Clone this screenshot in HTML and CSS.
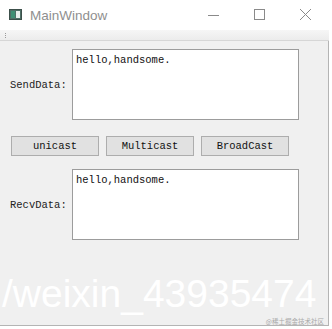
FILE: index.html
```html
<!DOCTYPE html>
<html lang="en">
<head>
  <meta charset="UTF-8" />
  <meta name="viewport" content="width=device-width, initial-scale=1.0" />
  <title>MainWindow</title>
  <link rel="stylesheet" href="styles.css">
</head>
<body>
  <div class="window">
    <div class="titlebar">
      <svg class="app-icon" width="13" height="11" viewBox="0 0 13 11">
        <rect x="0.5" y="0.5" width="12" height="10" fill="#4f6f66" stroke="#3c4f4a"/>
        <rect x="7" y="2" width="4" height="7" fill="#e8eeec"/>
        <rect x="2" y="2" width="4" height="7" fill="#3f8f74"/>
      </svg>
      <span class="title">MainWindow</span>
      <div class="controls">
        <svg width="46" height="30" viewBox="0 0 46 30"><line x1="18" y1="15.5" x2="29" y2="15.5" stroke="#8a8a8a"/></svg>
        <svg width="46" height="30" viewBox="0 0 46 30"><rect x="18.5" y="9.5" width="10" height="10" fill="none" stroke="#8a8a8a"/></svg>
        <svg width="46" height="30" viewBox="0 0 46 30"><path d="M18 9 L29 20 M29 9 L18 20" stroke="#8a8a8a" fill="none"/></svg>
      </div>
    </div>

    <div class="toolbar">
      <span class="grip"></span>
    </div>

    <div class="central">
      <div class="row">
        <label class="field-label">SendData:</label>
        <div class="textedit">hello,handsome.</div>
      </div>

      <div class="buttons">
        <button type="button">unicast</button>
        <button type="button">Multicast</button>
        <button type="button">BroadCast</button>
      </div>

      <div class="row">
        <label class="field-label">RecvData:</label>
        <div class="textedit">hello,handsome.</div>
      </div>

      <div class="watermark">/weixin_43935474</div>
      <div class="credit">@稀土掘金技术社区</div>
    </div>
  </div>
</body>
</html>
```

FILE: styles.css
```css
body {
  margin: 0;
  background: #ffffff;
  font-family: "Liberation Mono", "DejaVu Sans Mono", monospace;
}
.window {
  width: 332px;
  height: 329px;
  overflow: hidden;
}
.titlebar {
  height: 30px;
  display: flex;
  align-items: center;
  background: #ffffff;
}
.app-icon {
  margin-left: 9px;
  margin-top: -1px;
}
.title {
  margin-left: 8px;
  font-family: "Liberation Sans", Arial, sans-serif;
  font-size: 13.5px;
  color: #8f8f8f;
}
.controls {
  margin-left: auto;
  display: flex;
  margin-right: 4px;
}
.toolbar {
  height: 10px;
  width: 329px;
  background: linear-gradient(#f6f6f6, #ececec);
  border-bottom: 1px solid #d6d6d6;
  position: relative;
}
.grip {
  position: absolute;
  left: 5px;
  top: 3px;
  width: 1px;
  height: 5px;
  background: repeating-linear-gradient(#9a9a9a 0 1px, transparent 1px 2px);
}
.central {
  width: 328px;
  height: 276px;
  background: #f0f0f0;
  border-right: 1px solid #b4b4b4;
  border-bottom: 1px solid #b4b4b4;
  padding-top: 8px;
  position: relative;
  overflow: hidden;
}
.row {
  display: flex;
  align-items: center;
  padding-left: 10px;
}
.field-label {
  width: 62px;
  font-size: 10.5px;
  color: #222222;
}
.textedit {
  width: 219px;
  height: 61px;
  padding: 4px 3px;
  background: #ffffff;
  border: 1px solid #9c9c9c;
  font-size: 10.5px;
  color: #111111;
}
.buttons {
  display: flex;
  gap: 7px;
  padding-left: 11px;
  margin: 16px 0 13px;
}
.buttons button {
  width: 88px;
  height: 20px;
  padding: 0;
  background: #e1e1e1;
  border: 1px solid #adadad;
  font-family: "Liberation Mono", "DejaVu Sans Mono", monospace;
  font-size: 10.5px;
  color: #111111;
}
.watermark {
  margin-top: 36px;
  margin-left: 2px;
  font-family: "Liberation Sans", Arial, sans-serif;
  font-size: 39px;
  line-height: 36px;
  color: #ffffff;
  white-space: nowrap;
}
.credit {
  position: absolute;
  right: 4px;
  bottom: 0;
  font-family: "Noto Sans CJK SC", sans-serif;
  font-size: 6.5px;
  line-height: 7px;
  color: #a8a8a8;
}
```
